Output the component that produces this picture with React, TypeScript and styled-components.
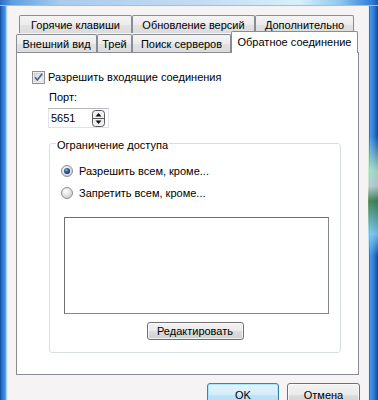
import styled, { createGlobalStyle } from "styled-components";

const GlobalStyle = createGlobalStyle`
  html, body {
    margin: 0;
    padding: 0;
    background: #ffffff;
  }
  body {
    font-family: "Liberation Sans", "DejaVu Sans", sans-serif;
    font-size: 11px;
    color: #000000;
  }
`;

const Window = styled.div`
  display: flex;
  flex-direction: column;
  width: 378px;
  height: 400px;
  overflow: hidden;
`;

const TopEdge = styled.div`
  flex: 0 0 6px;
  background: linear-gradient(
    to right,
    #2a6cc6 0,
    #5f9ee0 12px,
    #a9cbee 60px,
    #c4dcf2 200px,
    #d6f0fb 300px,
    #8fc6ee 340px,
    #2f7fd6 372px,
    #1d55a8 378px
  );
  border-bottom: 1px solid #a7bcd6;
  box-sizing: border-box;
`;

const Body = styled.div`
  display: flex;
  flex: 1 1 auto;
  min-height: 0;
`;

const LeftEdge = styled.div`
  flex: 0 0 8px;
  background: linear-gradient(
    to right,
    #184a96 0,
    #2674d0 2px,
    #3f92e2 5px,
    #79b3e8 6px,
    #e6edf6 7px,
    #e6edf6 8px
  );
`;

const RightEdge = styled.div`
  flex: 0 0 10px;
  background:
    linear-gradient(
      to bottom,
      transparent 130px,
      rgba(190, 240, 190, 0.8) 165px,
      rgba(210, 220, 210, 0.8) 180px,
      rgba(70, 130, 60, 0.8) 195px,
      rgba(150, 225, 245, 0.7) 228px,
      transparent 250px
    ),
    linear-gradient(
      to right,
      #e6edf6 0,
      #e6edf6 1px,
      #56698a 1px,
      #56698a 2px,
      #4a9ce6 2px,
      #2a78d4 6px,
      #184a96 10px
    );
`;

const Dialog = styled.div`
  display: flex;
  flex-direction: column;
  flex: 0 0 360px;
  background: #f5f3f3;
`;

const TabStrip = styled.div`
  display: flex;
  flex-direction: column;
  flex-shrink: 0;
  padding-top: 9px;
`;

const TabRow = styled.div<{ $indent: number; $height: number }>`
  display: flex;
  align-items: flex-end;
  height: ${(p) => p.$height}px;
  margin-left: ${(p) => p.$indent}px;
`;

const Tab = styled.div<{ $width: number; $active?: boolean }>`
  display: flex;
  align-items: center;
  justify-content: center;
  box-sizing: border-box;
  width: ${(p) => p.$width}px;
  height: ${(p) => (p.$active ? 22 : 18)}px;
  margin-bottom: ${(p) => (p.$active ? -1 : 0)}px;
  padding-bottom: ${(p) => (p.$active ? 2 : 0)}px;
  border: 1px solid #898c95;
  border-bottom: none;
  border-radius: 2px 2px 0 0;
  background: ${(p) =>
    p.$active
      ? "#ffffff"
      : "linear-gradient(to bottom, #f4f4f4 0%, #ececec 50%, #e2e2e2 51%, #dcdcdc 100%)"};
  position: ${(p) => (p.$active ? "relative" : "static")};
  white-space: nowrap;
  line-height: 14px;
`;

const Panel = styled.div`
  display: flex;
  flex-direction: column;
  flex-shrink: 0;
  box-sizing: border-box;
  height: 323px;
  margin: 0 9px 0 8px;
  padding: 17px 0 0 15px;
  border: 1px solid #898c95;
  background: #ffffff;
`;

const CheckRow = styled.label`
  display: flex;
  align-items: center;
  gap: 3px;
  height: 14px;
  line-height: 14px;
`;

const FieldLabel = styled.div`
  margin: 6px 0 0 17px;
  height: 14px;
  line-height: 14px;
`;

const SpinBox = styled.div`
  display: flex;
  align-items: center;
  justify-content: space-between;
  box-sizing: border-box;
  width: 61px;
  height: 20px;
  margin: 4px 0 0 16px;
  padding: 0 3px 0 2px;
  border: 1px solid #dfe3e8;
  border-top-color: #b5b8bd;
  background: #ffffff;
`;

const SpinValue = styled.span`
  line-height: 14px;
`;

const GroupBox = styled.div`
  display: flex;
  flex-direction: column;
  box-sizing: border-box;
  width: 292px;
  height: 210px;
  margin: 15px 0 0 17px;
  padding: 0 0 0 11px;
  border: 1px solid #d5dfe5;
  border-radius: 3px;
`;

const GroupLabel = styled.div`
  align-self: flex-start;
  margin: -6px 0 0 -5px;
  padding: 0 1px;
  background: #ffffff;
  line-height: 14px;
`;

const RadioRow = styled.label<{ $gap: number }>`
  display: flex;
  align-items: center;
  gap: 6px;
  margin-top: ${(p) => p.$gap}px;
  height: 14px;
  line-height: 14px;
`;

const ListBox = styled.div`
  box-sizing: border-box;
  width: 265px;
  height: 97px;
  margin: 17px 0 0 3px;
  border: 1px solid #828790;
  border-top-color: #6e6e6e;
  border-left-color: #6e6e6e;
  background: #ffffff;
`;

const ButtonRow = styled.div`
  display: flex;
  justify-content: center;
  margin: 8px 0 0 -11px;
`;

const Button = styled.div<{ $width: number; $default?: boolean }>`
  display: flex;
  align-items: center;
  justify-content: center;
  box-sizing: border-box;
  width: ${(p) => p.$width}px;
  height: ${(p) => (p.$default ? 23 : 18)}px;
  border: 1px solid ${(p) => (p.$default ? "#3c7fb1" : "#707070")};
  border-radius: 3px;
  background: ${(p) =>
    p.$default
      ? "linear-gradient(to bottom, #e5f4fc 0%, #d4edfa 50%, #bfe4f8 51%, #b2dcf3 100%)"
      : "linear-gradient(to bottom, #f2f2f2 0%, #ebebeb 50%, #dddddd 51%, #cfcfcf 100%)"};
  box-shadow: inset 0 0 0 1px
    ${(p) => (p.$default ? "rgba(160, 230, 255, 0.9)" : "rgba(255, 255, 255, 0.7)")};
  line-height: 14px;
  white-space: nowrap;
`;

const Footer = styled.div`
  display: flex;
  flex-shrink: 0;
  justify-content: flex-end;
  gap: 8px;
  padding: 8px 8px 0 0;
`;

const FooterButton = styled(Button)`
  height: 23px;
`;

function CheckBox() {
  return (
    <svg width="13" height="13" viewBox="0 0 13 13" aria-hidden="true">
      <defs>
        <linearGradient id="cbfill" x1="0" y1="0" x2="1" y2="1">
          <stop offset="0" stopColor="#d3d6db" />
          <stop offset="1" stopColor="#f8f8f8" />
        </linearGradient>
      </defs>
      <rect x="0.5" y="0.5" width="12" height="12" fill="#ffffff" stroke="#8e8f8f" />
      <rect x="2" y="2" width="9" height="9" fill="url(#cbfill)" stroke="#b0b3b8" strokeWidth="0.5" />
      <path d="M3 6.3 L5.4 9 L10.2 2.8" fill="none" stroke="#4a5f97" strokeWidth="1.7" />
    </svg>
  );
}

function Radio({ checked }: { checked?: boolean }) {
  return (
    <svg width="12" height="12" viewBox="0 0 12 12" aria-hidden="true">
      <defs>
        <radialGradient id="rdOff" cx="0.4" cy="0.35" r="0.7">
          <stop offset="0" stopColor="#ffffff" />
          <stop offset="1" stopColor="#c9cbce" />
        </radialGradient>
        <radialGradient id="rdDot" cx="0.4" cy="0.35" r="0.7">
          <stop offset="0" stopColor="#8fb3de" />
          <stop offset="0.5" stopColor="#2c5a9a" />
          <stop offset="1" stopColor="#112c55" />
        </radialGradient>
      </defs>
      <circle cx="6" cy="6" r="5.5" fill="url(#rdOff)" stroke="#8e8f8f" />
      {checked && <circle cx="6" cy="6" r="3" fill="url(#rdDot)" />}
    </svg>
  );
}

function SpinButtons() {
  return (
    <svg width="13" height="17" viewBox="0 0 13 17" aria-hidden="true">
      <rect x="0.5" y="0.5" width="12" height="16" rx="3" fill="#f0f0f0" stroke="#5a5a5a" />
      <line x1="1" y1="8.5" x2="12" y2="8.5" stroke="#5a5a5a" />
      <path d="M3.5 6.5 L6.5 3 L9.5 6.5 Z" fill="#111111" />
      <path d="M3.5 10.5 L9.5 10.5 L6.5 14 Z" fill="#111111" />
    </svg>
  );
}

const backTabs = [
  { label: "Горячие клавиши", width: 113 },
  { label: "Обновление версий", width: 123 },
  { label: "Дополнительно", width: 99 },
];

const frontTabs = [
  { label: "Внешний вид", width: 81 },
  { label: "Трей", width: 35 },
  { label: "Поиск серверов", width: 99 },
  { label: "Обратное соединение", width: 127, active: true },
];

export default function App() {
  return (
    <Window>
      <GlobalStyle />
      <TopEdge />
      <Body>
        <LeftEdge />
        <Dialog>
          <TabStrip>
            <TabRow $indent={11} $height={18}>
              {backTabs.map((t) => (
                <Tab key={t.label} $width={t.width}>
                  {t.label}
                </Tab>
              ))}
            </TabRow>
            <TabRow $indent={8} $height={19}>
              {frontTabs.map((t) => (
                <Tab key={t.label} $width={t.width} $active={t.active}>
                  {t.label}
                </Tab>
              ))}
            </TabRow>
          </TabStrip>

          <Panel>
            <CheckRow>
              <CheckBox />
              Разрешить входящие соединения
            </CheckRow>
            <FieldLabel>Порт:</FieldLabel>
            <SpinBox>
              <SpinValue>5651</SpinValue>
              <SpinButtons />
            </SpinBox>

            <GroupBox>
              <GroupLabel>Ограничение доступа</GroupLabel>
              <RadioRow $gap={12}>
                <Radio checked />
                Разрешить всем, кроме...
              </RadioRow>
              <RadioRow $gap={8}>
                <Radio />
                Запретить всем, кроме...
              </RadioRow>
              <ListBox />
              <ButtonRow>
                <Button $width={97}>Редактировать</Button>
              </ButtonRow>
            </GroupBox>
          </Panel>

          <Footer>
            <FooterButton $width={72} $default>
              OK
            </FooterButton>
            <FooterButton $width={73}>Отмена</FooterButton>
          </Footer>
        </Dialog>
        <RightEdge />
      </Body>
    </Window>
  );
}
